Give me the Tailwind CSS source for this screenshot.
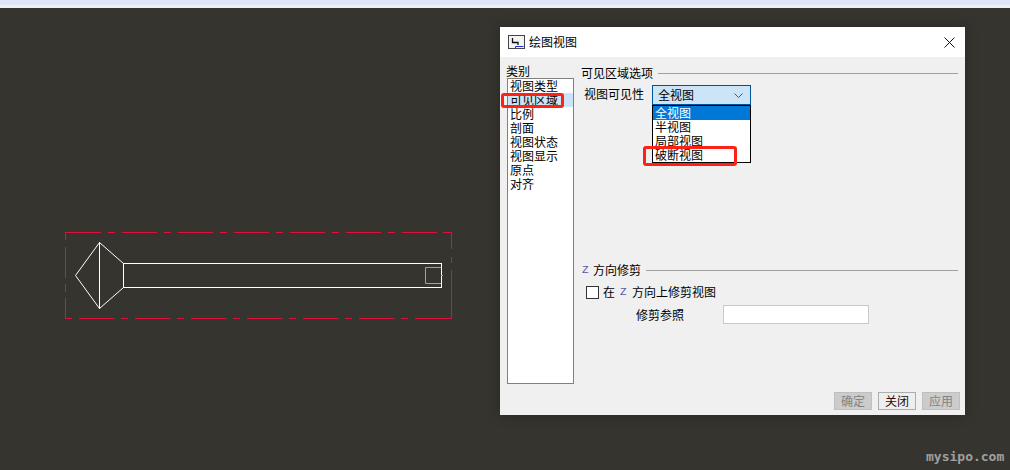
<!DOCTYPE html>
<html>
<head>
<meta charset="utf-8">
<script src="https://cdn.jsdelivr.net/npm/@tailwindcss/browser@4"></script>
</head>
<body class="m-0 overflow-hidden">
<div class="relative w-[1010px] h-[470px] bg-[#35342f] overflow-hidden font-['Noto_Sans_CJK_SC','Liberation_Sans',sans-serif] text-[12px] leading-[14px] text-black">
  <!-- browser edge -->
  <div class="h-[8px] flex flex-col">
    <div class="h-[5px] bg-[#dfe5f5]"></div>
    <div class="h-[3px] bg-[#f0f0f0]"></div>
  </div>

  <!-- drawing on the canvas -->
  <svg class="absolute left-0 top-0" width="1010" height="470" fill="none">
    <g stroke="#e0103c" stroke-width="1">
      <path d="M66 232.500H101M108 232.500H115M122 232.500H157M164 232.500H171M178 232.500H213M220 232.500H227M234 232.500H269M276 232.500H283M290 232.500H325M332 232.500H339M346 232.500H381M388 232.500H395M402 232.500H437M443 232.500H451.500"/>
      <path d="M451.500 232V249M451.500 257V263M451.500 270V318.500"/>
      <path d="M451.500 318.500H415M408 318.500H401M394 318.500H359M352 318.500H345M338 318.500H303M296 318.500H289M282 318.500H247M240 318.500H233M226 318.500H191M184 318.500H177M170 318.500H135M128 318.500H121M114 318.500H79M72 318.500H65.500"/>
      <path d="M65.500 319V298M65.500 292V284M65.500 278V247M65.500 240V232"/>
    </g>
    <g stroke="#fff" stroke-width="1">
      <path d="M123.500 263.500L99.500 242.500L75.500 275.500L99.500 308.500L123.500 287.500"/>
      <path d="M99.500 242V309"/>
      <rect x="123.500" y="263.500" width="318" height="24"/>
    </g>
    <path d="M441 267.500H425.500V283.500H441" stroke="#a3a39d"/>
    <path d="M441 275.500H443" stroke="#a3a39d"/>
  </svg>

  <!-- dialog window -->
  <div class="absolute left-[500px] top-[27px] w-[465px] h-[388px] flex flex-col shadow-[0_0_12px_rgba(0,0,0,0.25)]">
    <div class="h-[30px] bg-white flex items-center pl-[8px] pr-[10px]">
      <svg width="17" height="14" viewBox="0 0 17 14" fill="none">
        <rect x="0.500" y="0.500" width="16" height="13" fill="#f4f4f4" stroke="#444"/>
        <path d="M4.500 3V7.500H10V10" stroke="#111" stroke-width="1.300"/>
        <path d="M7.500 13V11.500H15.500" stroke="#1e2bd0"/>
      </svg>
      <span class="ml-[4px]">绘图视图</span>
      <svg class="ml-auto" width="11" height="11" viewBox="0 0 11 11" fill="none" stroke="#111">
        <path d="M0.500 0.500L10.500 10.500M10.500 0.500L0.500 10.500"/>
      </svg>
    </div>
    <div class="flex-1 bg-[#f0f0f0] flex">
      <!-- category list -->
      <div class="w-[82px] pl-[6px] pt-[7px]">
        <div class="h-[14px]">类别</div>
        <div class="ml-[1px] w-[67px] h-[306px] bg-white border border-[#808080]">
          <div class="pl-[2px] h-[14px]">视图类型</div>
          <div class="pl-[2px] h-[14px] bg-[#cce4f7]">可见区域</div>
          <div class="pl-[2px] h-[14px]">比例</div>
          <div class="pl-[2px] h-[14px]">剖面</div>
          <div class="pl-[2px] h-[14px]">视图状态</div>
          <div class="pl-[2px] h-[14px]">视图显示</div>
          <div class="pl-[2px] h-[14px]">原点</div>
          <div class="pl-[2px] h-[14px]">对齐</div>
        </div>
      </div>
      <!-- options -->
      <div class="flex-1 flex flex-col pt-[9px] pr-[5px] pb-[5px]">
        <div class="flex items-center mr-[2px]">
          <span class="-ml-px">可见区域选项</span>
          <div class="flex-1 ml-[5px] h-px bg-[#a0a0a0]"></div>
        </div>
        <div class="flex mt-[5px] pl-[2px]">
          <span class="w-[68px] pt-[2px]">视图可见性</span>
          <div class="relative w-[99px] h-[20px] bg-[#cce4f7] border border-[#005499] flex items-center pl-[5px] pr-[7px]">
            <span>全视图</span>
            <svg class="ml-auto" width="9" height="5" viewBox="0 0 9 5" fill="none" stroke="#555"><path d="M0.500 0.500L4.500 4.500L8.500 0.500"/></svg>
            <div class="absolute left-[-1px] top-[19px] w-[99px] h-[58px] bg-white border border-black">
              <div class="pl-[2px] h-[14px] bg-[#0078d7] text-white">全视图</div>
              <div class="pl-[2px] h-[14px]">半视图</div>
              <div class="pl-[2px] h-[14px]">局部视图</div>
              <div class="pl-[2px] h-[14px]">破断视图</div>
            </div>
          </div>
        </div>
        <div class="flex items-center mt-[158px] mr-[2px]">
          <span class="font-['Liberation_Mono',monospace] text-[11px] text-[#5a55a0] w-[11px]">Z</span>
          <span>方向修剪</span>
          <div class="flex-1 ml-[5px] h-px bg-[#a0a0a0]"></div>
        </div>
        <div class="flex items-center mt-[8px] pl-[4px]">
          <div class="w-[13px] h-[13px] bg-white border border-[#333]"></div>
          <span class="ml-[4px]">在</span>
          <span class="font-['Liberation_Mono',monospace] text-[11px] text-[#5a55a0] ml-[5px] w-[7px]">Z</span>
          <span class="ml-[5px]">方向上修剪视图</span>
        </div>
        <div class="flex items-center mt-[6px] pl-[54px]">
          <span class="w-[87px]">修剪参照</span>
          <div class="w-[146px] h-[19px] bg-white border border-[#c8c8c8]"></div>
        </div>
        <div class="mt-auto flex justify-end gap-[6px]">
          <div class="w-[38px] h-[18px] bg-[#cccccc] border border-[#bfbfbf] text-[#838383] flex items-center justify-center">确定</div>
          <div class="w-[38px] h-[18px] bg-[#eeeeee] border border-[#adadad] text-[#2a0a0a] flex items-center justify-center">关闭</div>
          <div class="w-[38px] h-[18px] bg-[#cccccc] border border-[#bfbfbf] text-[#838383] flex items-center justify-center">应用</div>
        </div>
      </div>
    </div>
  </div>

  <!-- red marks over the dialog -->
  <div class="absolute left-[501px] top-[93px] w-[63px] h-[15px] border-[3px] border-[#ff2016] rounded-[3px]"></div>
  <div class="absolute left-[643px] top-[146px] w-[94px] h-[20px] border-[3px] border-[#ff2016] rounded-[3px]"></div>

  <!-- watermark -->
  <div class="absolute left-[926px] top-[448px] font-['DejaVu_Sans_Mono',monospace] font-bold text-[13px] leading-[18px] text-[#a0a0a0]">mysipo.com</div>
</div>
</body>
</html>
